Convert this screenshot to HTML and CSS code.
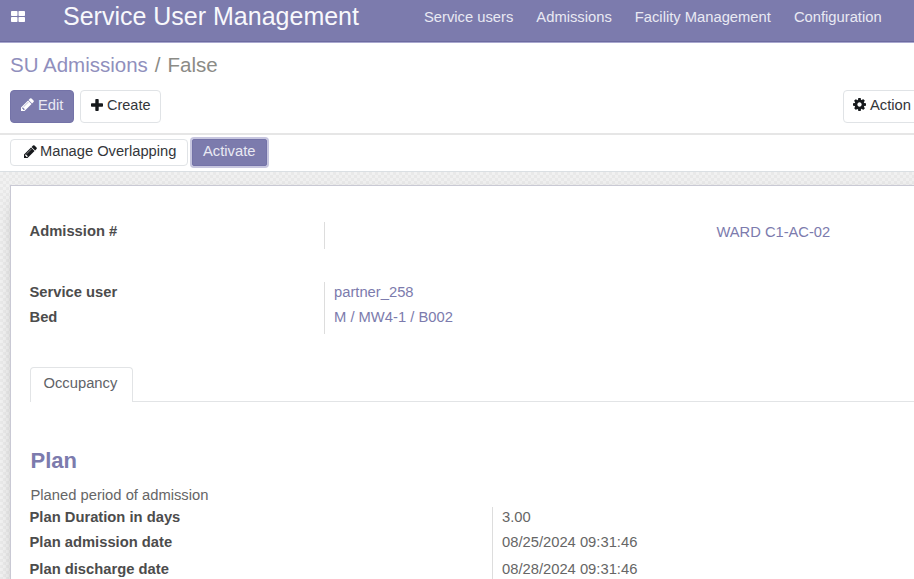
FILE: index.html
```html
<!DOCTYPE html>
<html lang="en">
<head>
<meta charset="utf-8">
<title>Service User Management</title>
<link rel="stylesheet" href="styles.css">
</head>
<body>
<header class="navbar">
  <svg class="apps" viewBox="0 0 14 11" width="14" height="11" fill="currentColor"><rect width="6.5" height="5" rx=".8"/><rect x="7.5" width="6.5" height="5" rx=".8"/><rect y="6" width="6.5" height="5" rx=".8"/><rect x="7.5" y="6" width="6.5" height="5" rx=".8"/></svg>
  <span class="brand">Service User Management</span>
  <nav class="menu"><a>Service users</a><a>Admissions</a><a>Facility Management</a><a>Configuration</a></nav>
</header>
<section class="control">
  <div class="crumbs"><a>SU Admissions</a><span class="sep">/</span><span>False</span></div>
  <div class="actions">
    <button class="btn primary edit"><svg viewBox="0 0 1536 1536" width="13" height="13" fill="currentColor"><path d="M363 1408l91-91-235-235-91 91v107h128v128zM886 480q0-22-22-22-10 0-17 7l-542 542q-7 7-7 17 0 22 22 22 10 0 17-7l542-542q7-7 7-17zM832 288l416 416-832 832H0v-416zM1515 384q0 53-37 90l-166 166-416-416 166-165q36-38 90-38 53 0 91 38l235 234q37 39 37 91z"/></svg>Edit</button>
    <button class="btn create"><svg viewBox="0 0 12 12" width="12" height="12" fill="currentColor"><path d="M5.1 0h1.8q.8 0 .8.8v3.500h3.500q.8 0 .8.8v1.800q0 .8-.8.8H7.700v3.500q0 .8-.8.8H5.100q-.8 0-.8-.8V7.700H.8Q0 7.700 0 6.900V5.100q0-.8.8-.8h3.500V.8q0-.8.8-.8z"/></svg>Create</button>
    <button class="btn action"><svg viewBox="0 0 1536 1536" width="13" height="13" fill="currentColor"><path d="M1024 768q0-106-75-181t-181-75-181 75-75 181 75 181 181 75 181-75 75-181zm512-109v222q0 12-8 23t-20 13l-185 28q-19 54-39 91 35 50 107 138 10 12 10 25t-9 23q-27 37-99 108t-94 71q-12 0-26-9l-138-108q-44 23-91 38-16 136-29 186-7 28-36 28H657q-14 0-24.500-8.500T621 1506l-28-184q-49-16-90-37l-141 107q-10 9-25 9-14 0-25-11-126-114-165-168-7-10-7-23 0-12 8-23 15-21 51-66.500t54-70.500q-27-50-41-99L29 913q-13-2-21-12.500T0 877V655q0-12 8-23t19-13l186-28q14-46 39-92-40-57-107-138-10-12-10-24 0-10 9-23 26-36 98.500-107.500T337 135q13 0 26 10l138 107q44-23 91-38 16-136 29-186 7-28 36-28h222q14 0 24.500 8.500T915 30l28 184q49 16 90 37l142-107q9-9 24-9 13 0 25 10 129 119 165 170 7 8 7 22 0 12-8 23-15 21-51 66.500t-54 70.500q26 50 41 98l183 28q13 2 21 12.500t8 23.500z"/></svg>Action</button>
  </div>
</section>
<section class="statusbar">
  <button class="btn overlap"><svg viewBox="0 0 1536 1536" width="13" height="13" fill="currentColor"><path d="M363 1408l91-91-235-235-91 91v107h128v128zM886 480q0-22-22-22-10 0-17 7l-542 542q-7 7-7 17 0 22 22 22 10 0 17-7l542-542q7-7 7-17zM832 288l416 416-832 832H0v-416zM1515 384q0 53-37 90l-166 166-416-416 166-165q36-38 90-38 53 0 91 38l235 234q37 39 37 91z"/></svg>Manage Overlapping</button>
  <button class="btn primary activate">Activate</button>
</section>
<main class="backdrop">
  <article class="sheet">
    <div class="top">
      <dl class="group first"><dt>Admission #</dt><dd></dd></dl>
      <a class="ward">WARD C1-AC-02</a>
    </div>
    <dl class="group second">
      <dt>Service user</dt><dd><a>partner_258</a></dd>
      <dt>Bed</dt><dd><a>M / MW4-1 / B002</a></dd>
    </dl>
    <div class="tabs"><div class="tab">Occupancy</div><div class="rule"></div></div>
    <h2>Plan</h2>
    <p>Planed period of admission</p>
    <dl class="group plan">
      <dt>Plan Duration in days</dt><dd>3.00</dd>
      <dt>Plan admission date</dt><dd>08/25/2024 09:31:46</dd>
      <dt>Plan discharge date</dt><dd>08/28/2024 09:31:46</dd>
    </dl>
  </article>
</main>
</body>
</html>
```
FILE: styles.css
```css
* { box-sizing: border-box; }
body {
  margin: 0;
  height: 579px;
  overflow: hidden;
  display: flex;
  flex-direction: column;
  background: #fff;
  color: #4c4c4c;
  font: 14.75px/20px "Liberation Sans", Arial, sans-serif;
}
a { color: #7c7bad; }
.navbar {
  height: 43px;
  flex: none;
  display: flex;
  align-items: flex-start;
  padding-left: 11px;
  background: #7c7bad;
  border-bottom: 1px solid #a9a8cf;
  box-shadow: inset 0 -1px #6c6a9f;
  color: #fff;
  white-space: nowrap;
}
.apps { margin-top: 11px; flex: none; }
.brand { width: 361px; padding-left: 38px; font-size: 25px; line-height: 32px; flex: none; color: #f8f8fc; }
.menu { display: flex; gap: 23px; padding-top: 7px; margin-left: 38px; }
.menu a { color: #e9e9f3; }
.control { height: 92px; flex: none; border-bottom: 2px solid #e6e6e6; padding: 8px 0 0 10px; }
.crumbs { display: flex; font-size: 20.5px; line-height: 28px; color: #8b8b86; }
.crumbs a { color: #908fbd; }
.sep { margin: 0 7px; }
.actions { display: flex; gap: 6px; margin-top: 11px; }
.btn {
  height: 33px;
  flex: none;
  display: flex;
  align-items: center;
  border: 1px solid #e0e3e6;
  border-radius: 4px;
  background: #fff;
  color: #33363a;
  font: inherit;
  white-space: nowrap;
  padding: 0 0 4px 10px;
}
.btn svg { margin-right: 4px; flex: none; color: #16191c; }
.primary { background: #7c7bad; border-color: #7473a8; color: #e9e9f3; }
.primary svg { color: #fff; }
.edit { width: 64px; }
.edit svg { margin-right: 4px; }
.create { width: 81px; font-size: 14.5px; }
.action { width: 90px; margin-left: 676px; padding-left: 9px; }
.statusbar { height: 37px; flex: none; display: flex; padding: 4px 0 0 10px; border-bottom: 1px solid #dadfe3; }
.overlap { width: 178px; height: 27px; padding: 0 0 3px 13px; font-size: 14.7px; }
.overlap svg { margin-right: 3px; }
.activate { width: 75px; height: 27px; margin-left: 4px; padding: 0 0 3px 10px; border-radius: 2px; box-shadow: 0 0 0 2px #c7c6df; }
.backdrop {
  flex: 1;
  padding: 13px 0 0 10px;
  overflow: hidden;
  background: repeating-conic-gradient(#e9e9e9 0 25%, #f1f1f1 0 50%) 0 0 / 6px 6px;
}
.sheet { width: 930px; height: 500px; padding: 35px 0 0 18.500px; background: #fff; border: 1px solid #c9c9d4; box-shadow: 0 5px 20px -15px #000; }
.top { display: flex; height: 61px; }
.group { margin: 0; display: grid; }
.group dt { font-weight: bold; }
.group dd { margin: 0; padding-left: 9px; border-left: 1px solid #ddd; }
.first { width: 687px; grid-template-columns: 294.500px 1fr; height: 28px; }
.first dd { margin-top: 1px; height: 27px; }
.ward { font-size: 14.7px; padding-top: 1px; }
.second { grid-template-columns: 294.500px 1fr; grid-template-rows: 25px 27px; height: 52px; }
.tabs { display: flex; align-items: flex-end; margin-top: 33px; }
.tab { width: 103px; height: 35px; border: 1px solid #e2e4e6; border-bottom: 0; border-radius: 4px 4px 0 0; padding: 5px 0 0 13px; color: #5f6368; }
.rule { flex: 1; border-bottom: 1px solid #e2e4e6; }
h2 { margin: 45px 0 0 1px; font-size: 22px; line-height: 28px; color: #7c7bad; }
p { margin: 10px 0 2px 1px; line-height: 20px; color: #666; }
.plan { grid-template-columns: 462.500px 1fr; grid-template-rows: 25px 27px 26px; }
.plan dd { color: #666; }
```
